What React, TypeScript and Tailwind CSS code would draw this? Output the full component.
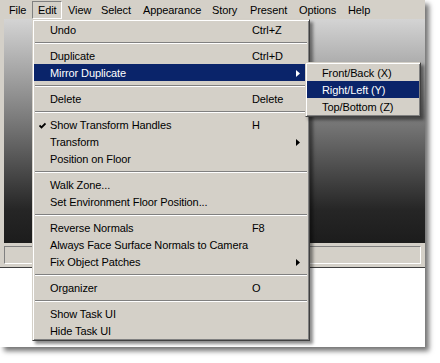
type Entry =
  | { label: string; shortcut?: string; sub?: boolean; checked?: boolean; active?: boolean }
  | "sep";

// largeurs relevées sur la capture
const menuBar: [string, string][] = [
  ["File", "w-[29px]"],
  ["Edit", "w-[30px]"],
  ["View", "w-[33px]"],
  ["Select", "w-[42px]"],
  ["Appearance", "w-[69px]"],
  ["Story", "w-[38px]"],
  ["Present", "w-[49px]"],
  ["Options", "w-[49px]"],
  ["Help", "w-[36px]"],
];

const editMenu: Entry[] = [
  { label: "Undo", shortcut: "Ctrl+Z" },
  "sep",
  { label: "Duplicate", shortcut: "Ctrl+D" },
  { label: "Mirror Duplicate", sub: true, active: true },
  "sep",
  { label: "Delete", shortcut: "Delete" },
  "sep",
  { label: "Show Transform Handles", shortcut: "H", checked: true },
  { label: "Transform", sub: true },
  { label: "Position on Floor" },
  "sep",
  { label: "Walk Zone..." },
  { label: "Set Environment Floor Position..." },
  "sep",
  { label: "Reverse Normals", shortcut: "F8" },
  { label: "Always Face Surface Normals to Camera" },
  { label: "Fix Object Patches", sub: true },
  "sep",
  { label: "Organizer", shortcut: "O" },
  "sep",
  { label: "Show Task UI" },
  { label: "Hide Task UI" },
];

const mirrorMenu = [
  { label: "Front/Back (X)", active: false },
  { label: "Right/Left (Y)", active: true },
  { label: "Top/Bottom (Z)", active: false },
];

// flèche de sous-menu, style Windows classique
function Arrow({ white }: { white?: boolean }) {
  return (
    <svg width="4" height="7" viewBox="0 0 4 7" className="block">
      <path d="M0 0 L4 3.5 L0 7 Z" fill={white ? "#ffffff" : "#000000"} />
    </svg>
  );
}

function Check() {
  return (
    <svg width="7" height="7" viewBox="0 0 7 7" className="block">
      <path d="M0.5 3.5 L2.5 5.5 L6.5 1.5" stroke="#000" strokeWidth="1.8" fill="none" />
    </svg>
  );
}

function Separator() {
  return (
    <div className="flex h-[9px] flex-col justify-center px-px">
      <div className="border-t border-b border-t-[#808080] border-b-white" />
    </div>
  );
}

const popupFrame =
  "absolute z-10 bg-[#d4d0c8] border border-t-[#d4d0c8] border-l-[#d4d0c8] border-r-[#404040] border-b-[#404040] p-px shadow-[inset_1px_1px_0_#ffffff,inset_-1px_-1px_0_#808080,3px_3px_3px_rgba(0,0,0,0.45)]";

export default function App() {
  return (
    <div className="relative h-[363px] w-[440px] overflow-hidden bg-white font-['Liberation_Sans',Arial,sans-serif] text-[11px] leading-none tracking-[-0.1px] text-black">
      {/* fenêtre capturée */}
      <div className="flex h-[347px] w-[425px] flex-col bg-white shadow-[4px_4px_5px_rgba(0,0,0,0.55)]">
        <div className="flex h-[19px] items-start bg-[#d4d0c8] pl-[3px] pt-px">
          {menuBar.map(([m, w]) => (
            <div
              key={m}
              className={
                m === "Edit"
                  ? `flex h-[18px] ${w} items-center border border-t-[#808080] border-l-[#808080] border-r-white border-b-white pl-[5px] pt-px`
                  : `flex h-[18px] ${w} items-center border border-transparent pl-[5px] pt-px`
              }
            >
              {m}
            </div>
          ))}
        </div>

        <div className="flex h-[224px] bg-[#d4d0c8] pl-[4px]">
          <div className="flex-1 bg-[linear-gradient(to_bottom,#d4d4d4_0%,#7a7a7a_45%,#262626_85%,#1c1c1c_100%)]" />
        </div>

        <div className="h-[25px] border-b border-b-[#404040] bg-[#d4d0c8] px-[4px] pt-[3px]">
          <div className="h-[18px] border border-t-[#808080] border-l-[#808080] border-r-white border-b-white" />
        </div>

        <div className="flex-1 bg-white" />
      </div>

      {/* menu Edit */}
      <div className={`${popupFrame} left-[32px] top-[19px] w-[278px]`}>
        {editMenu.map((e, i) =>
          e === "sep" ? (
            <Separator key={i} />
          ) : (
            <div
              key={i}
              className={`flex h-[17px] items-center pt-[2px] ${e.active ? "bg-[#0a246a] text-white" : ""}`}
            >
              <span className="flex w-[16px] justify-center">{e.checked && <Check />}</span>
              <span className="w-[202px] whitespace-nowrap">{e.label}</span>
              <span className="w-[44px] whitespace-nowrap">{e.shortcut}</span>
              {e.sub && <Arrow white={e.active} />}
            </div>
          ),
        )}
      </div>

      {/* sous-menu Mirror Duplicate */}
      <div className={`${popupFrame} left-[305px] top-[62px] w-[116px]`}>
        {mirrorMenu.map((m) => (
          <div
            key={m.label}
            className={`flex h-[17px] items-center whitespace-nowrap pl-[15px] pt-[2px] ${m.active ? "bg-[#0a246a] text-white" : ""}`}
          >
            {m.label}
          </div>
        ))}
      </div>
    </div>
  );
}
